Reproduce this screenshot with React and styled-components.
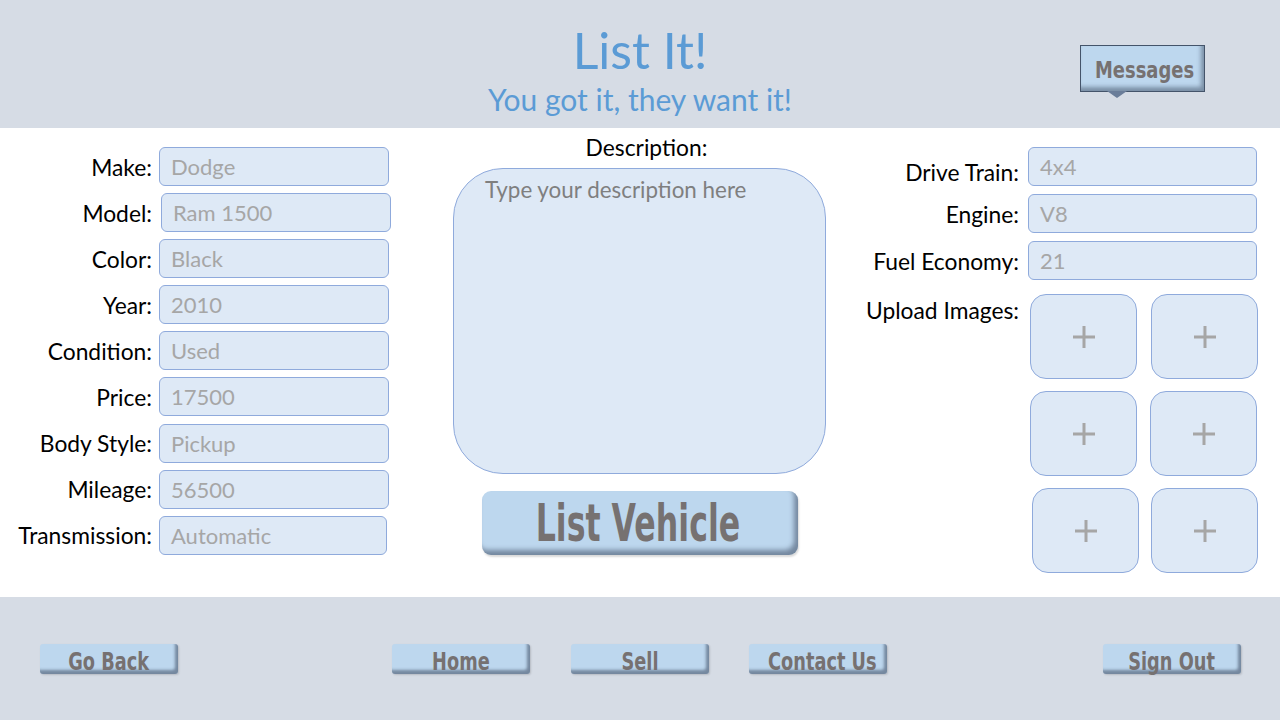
import React from "react";
import styled, { createGlobalStyle } from "styled-components";

const GlobalStyle = createGlobalStyle`
  html, body {
    margin: 0;
    padding: 0;
    background: #ffffff;
  }
  body {
    font-family: Lato, "Open Sans", sans-serif;
  }
`;

const Page = styled.div`
  width: 1280px;
  height: 720px;
  display: flex;
  flex-direction: column;
  overflow: hidden;
`;

const Header = styled.header`
  height: 128px;
  background: #d6dce5;
  display: grid;
  grid-template-columns: 1fr auto 1fr;
  align-items: start;
`;

const TitleBlock = styled.div`
  grid-column: 2;
  display: flex;
  flex-direction: column;
  align-items: center;
  color: #5b9bd5;
  padding-top: 21px;
`;

const Title = styled.h1`
  margin: 0;
  font-size: 50px;
  font-weight: 400;
  line-height: 58px;
`;

const Subtitle = styled.h2`
  margin: 0;
  font-size: 30px;
  font-weight: 400;
  line-height: 40px;
`;

const condensed = `
  font-family: "DejaVu Sans", "Liberation Sans", sans-serif;
  font-weight: 700;
  color: #767171;
`;

/* the reference uses a narrow display face; squeeze DejaVu Bold to match */
const Squeeze = styled.span`
  display: inline-block;
  transform: scaleX(${(p) => p.$sx || 0.75});
  margin: 0 ${(p) => -(p.$trim || 0)}px;
  white-space: nowrap;
`;

const MessagesButton = styled.button`
  ${condensed}
  grid-column: 3;
  justify-self: end;
  margin: 45px 75px 0 0;
  position: relative;
  width: 125px;
  height: 47px;
  font-size: 23px;
  background: #bdd7ee;
  border: 1px solid #44546a;
  box-shadow: inset -3px -4px 4px rgba(68, 84, 106, 0.55);
  padding: 2px 6px 0 0;
  cursor: pointer;

  &::after {
    content: "";
    position: absolute;
    left: 26px;
    bottom: -7px;
    border-left: 10px solid transparent;
    border-right: 10px solid transparent;
    border-top: 7px solid #6a7d99;
  }
`;

const Main = styled.main`
  height: 469px;
  display: flex;
  align-items: flex-start;
`;

const LeftForm = styled.div`
  margin-top: 19px;
  display: grid;
  grid-template-columns: 152px 230px;
  column-gap: 7px;
  row-gap: 7.1px;
  grid-auto-rows: 39px;
  align-items: center;
`;

const Label = styled.label`
  font-size: 22.8px;
  color: #000;
  text-align: right;
  white-space: nowrap;
  align-self: ${(p) => p.$align || "center"};
  padding-top: ${(p) => p.$offset || 0}px;
`;

const Field = styled.div`
  height: 39px;
  box-sizing: border-box;
  width: ${(p) => p.$width || "100%"};
  margin-left: ${(p) => p.$shift || 0}px;
  background: #dee9f6;
  border: 1px solid #8faadc;
  border-radius: 6px;
  padding-left: 11px;
  display: flex;
  align-items: center;
  font-size: 22px;
  color: #a6a6a6;
`;

const Center = styled.div`
  margin-left: 64px;
  width: 373px;
  display: flex;
  flex-direction: column;
  align-items: center;
`;

const DescLabel = styled.div`
  font-size: 22.8px;
  color: #000;
  margin: 5px 0 0 14px;
  line-height: 28px;
`;

const DescBox = styled.div`
  margin-top: 7px;
  width: 373px;
  height: 306px;
  box-sizing: border-box;
  background: #dee9f6;
  border: 1px solid #8faadc;
  border-radius: 50px;
  padding: 7px 0 0 31px;
  font-size: 22.4px;
  color: #7f7f7f;
`;

const ListButton = styled.button`
  ${condensed}
  margin-top: 17px;
  width: 316px;
  height: 64px;
  font-size: 51px;
  background: #bdd7ee;
  border: none;
  border-radius: 9px;
  box-shadow: inset -4px -5px 5px rgba(68, 84, 106, 0.6), 1px 2px 2px rgba(0, 0, 0, 0.15);
  cursor: pointer;
  padding: 0 3px 0 0;
`;

const RightForm = styled.div`
  margin: 18px 0 0 33px;
  display: grid;
  grid-template-columns: 160px 229px;
  column-gap: 9px;
  row-gap: 8px;
  align-items: center;
`;

const UploadGrid = styled.div`
  margin-top: 6px;
  margin-left: 2px;
  display: grid;
  grid-template-columns: 107px 107px;
  grid-auto-rows: 85px;
  column-gap: 14px;
  row-gap: 12px;
`;

const Tile = styled.div`
  box-sizing: border-box;
  background: #dee9f6;
  border: 1px solid #8faadc;
  border-radius: 16px;
  display: flex;
  align-items: center;
  justify-content: center;
  transform: translateX(${(p) => p.$dx || 0}px);
`;

const Plus = () => (
  <svg width="24" height="24" viewBox="0 0 24 24">
    <path d="M12 1v22M1 12h22" stroke="#a6a6a6" strokeWidth="3" />
  </svg>
);

const Footer = styled.footer`
  flex: 1;
  background: #d6dce5;
  display: flex;
  align-items: flex-start;
  padding: 47px 0 0 40px;
`;

const NavButton = styled.button`
  ${condensed}
  width: 138px;
  height: 30px;
  margin-left: ${(p) => p.$gap || 0}px;
  font-size: 24px;
  line-height: 30px;
  background: #bdd7ee;
  border: none;
  border-radius: 3px;
  box-shadow: inset -3px -4px 3px rgba(68, 84, 106, 0.6), 1px 1px 2px rgba(0, 0, 0, 0.15);
  padding: 3px 0 0;
  cursor: pointer;
`;

const leftFields = [
  ["Make:", "Dodge"],
  ["Model:", "Ram 1500", 2],
  ["Color:", "Black"],
  ["Year:", "2010"],
  ["Condition:", "Used"],
  ["Price:", "17500"],
  ["Body Style:", "Pickup"],
  ["Mileage:", "56500"],
  ["Transmission:", "Automatic", 0, "228px"],
];

const navItems = [
  ["Go Back", 0],
  ["Home", 214],
  ["Sell", 41],
  ["Contact Us", 40],
  ["Sign Out", 216],
];

const tileOffsets = [0, 0, 0, -1, 2, 0];

export default function App() {
  return (
    <Page>
      <GlobalStyle />
      <Header>
        <TitleBlock>
          <Title>List It!</Title>
          <Subtitle>You got it, they want it!</Subtitle>
        </TitleBlock>
        <MessagesButton>
          <Squeeze $sx={0.78}>Messages</Squeeze>
        </MessagesButton>
      </Header>

      <Main>
        <LeftForm>
          {leftFields.map(([label, value, shift, width]) => (
            <React.Fragment key={label}>
              <Label>{label}</Label>
              <Field $shift={shift} $width={width}>{value}</Field>
            </React.Fragment>
          ))}
        </LeftForm>

        <Center>
          <DescLabel>Description:</DescLabel>
          <DescBox>Type your description here</DescBox>
          <ListButton>
            <Squeeze $sx={0.62} $trim={50}>List Vehicle</Squeeze>
          </ListButton>
        </Center>

        <RightForm>
          <Label $offset={12}>Drive Train:</Label>
          <Field>4x4</Field>
          <Label>Engine:</Label>
          <Field>V8</Field>
          <Label>Fuel Economy:</Label>
          <Field>21</Field>
          <Label $align="start" $offset={8}>Upload Images:</Label>
          <UploadGrid>
            {tileOffsets.map((dx, i) => (
              <Tile key={i} $dx={dx}>
                <Plus />
              </Tile>
            ))}
          </UploadGrid>
        </RightForm>
      </Main>

      <Footer>
        {navItems.map(([text, gap]) => (
          <NavButton key={text} $gap={gap}>
            <Squeeze $sx={0.74}>{text}</Squeeze>
          </NavButton>
        ))}
      </Footer>
    </Page>
  );
}
